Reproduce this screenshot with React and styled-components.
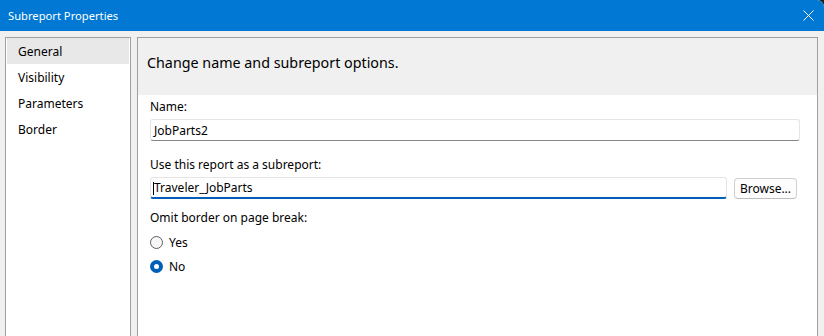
import React from "react";
import styled, { createGlobalStyle } from "styled-components";

const GlobalStyle = createGlobalStyle`
  html, body {
    margin: 0;
    padding: 0;
    background: #1c1c1c;
  }
  * {
    box-sizing: border-box;
  }
`;

const navItems = ["General", "Visibility", "Parameters", "Border"];

function Radio({ checked, label }) {
  return (
    <RadioRow>
      <RadioDot checked={checked} />
      <RadioLabel>{label}</RadioLabel>
    </RadioRow>
  );
}

export default function App() {
  return (
    <Window>
      <GlobalStyle />
      <TitleBar>
        <Title>Subreport Properties</Title>
        <CloseButton>
          <svg width="11" height="11" viewBox="0 0 11 11">
            <path d="M0.5 0.5 L10.5 10.5 M10.5 0.5 L0.5 10.5" stroke="#fff" strokeWidth="1" />
          </svg>
        </CloseButton>
      </TitleBar>
      <Body>
        <Nav>
          {navItems.map((item, i) => (
            <NavItem key={item} selected={i === 0}>
              {item}
            </NavItem>
          ))}
        </Nav>
        <Panel>
          <Header>Change name and subreport options.</Header>
          <Content>
            <Label>Name:</Label>
            <TextBox>JobParts2</TextBox>
            <Label top={16}>Use this report as a subreport:</Label>
            <BrowseRow>
              <TextBox focused>
                <Caret />
                Traveler_JobParts
              </TextBox>
              <Button>Browse...</Button>
            </BrowseRow>
            <Label top={11}>Omit border on page break:</Label>
            <Radio label="Yes" />
            <Radio label="No" checked />
          </Content>
        </Panel>
      </Body>
    </Window>
  );
}

const Window = styled.div`
  width: 824px;
  height: 336px;
  overflow: hidden;
  background: #f0f0f0;
  border-top-right-radius: 7px;
  display: flex;
  flex-direction: column;
  font-family: "Noto Sans", "Segoe UI", sans-serif;
  font-size: 12px;
  color: #000;
`;

const TitleBar = styled.div`
  height: 31px;
  flex-shrink: 0;
  background: #0078d4;
  display: flex;
  align-items: center;
  justify-content: space-between;
  padding: 0 10px 0 8px;
`;

const Title = styled.div`
  color: #fff;
  font-size: 11.2px;
`;

const CloseButton = styled.div`
  display: flex;
  align-items: center;
`;

const Body = styled.div`
  flex: 1;
  display: flex;
  gap: 6px;
  padding: 6px 6px 0 5px;
`;

const Nav = styled.div`
  width: 126px;
  background: #fff;
  border: 1px solid #a0a0a0;
  border-bottom: none;
  padding: 0 1px;
`;

const NavItem = styled.div`
  height: 26px;
  display: flex;
  align-items: center;
  padding-left: 11px;
  background: ${(p) => (p.selected ? "#e8e8e8" : "transparent")};
`;

const Panel = styled.div`
  width: 681px;
  border: 1px solid #a0a0a0;
  border-bottom: none;
  display: flex;
  flex-direction: column;
`;

const Header = styled.div`
  height: 57px;
  display: flex;
  align-items: center;
  padding: 0 0 9px 9px;
  font-size: 14.3px;
  background: #f0f0f0;
`;

const Content = styled.div`
  flex: 1;
  background: #fff;
  padding: 4px 17px 0 12px;
`;

const Label = styled.div`
  line-height: 16px;
  margin-top: ${(p) => p.top || 0}px;
  margin-bottom: 4px;
`;

const TextBox = styled.div`
  position: relative;
  height: 22px;
  flex: 1;
  display: flex;
  align-items: center;
  padding-left: 3px;
  background: #fff;
  border: 1px solid #e5e5e5;
  border-bottom: ${(p) => (p.focused ? "2px solid #005fb8" : "1px solid #868686")};
  border-radius: 3px;
`;

const Caret = styled.span`
  position: absolute;
  left: 2px;
  top: 4px;
  width: 1px;
  height: 13px;
  background: #000;
`;

const BrowseRow = styled.div`
  display: flex;
  align-items: flex-start;
  gap: 7px;
  padding-right: 3px;
`;

const Button = styled.div`
  width: 63px;
  height: 21px;
  margin-top: 1px;
  display: flex;
  align-items: center;
  justify-content: center;
  background: #fdfdfd;
  border: 1px solid #d0d0d0;
  border-bottom-color: #bdbdbd;
  border-radius: 4px;
`;

const RadioRow = styled.div`
  height: 24px;
  display: flex;
  align-items: center;
  gap: 6px;
`;

const RadioDot = styled.span`
  width: 13px;
  height: 13px;
  border-radius: 50%;
  background: ${(p) => (p.checked ? "#005fb8" : "#f7f7f7")};
  border: ${(p) => (p.checked ? "none" : "1px solid #5f5f5f")};
  display: flex;
  align-items: center;
  justify-content: center;

  &::after {
    content: "";
    display: ${(p) => (p.checked ? "block" : "none")};
    width: 5px;
    height: 5px;
    border-radius: 50%;
    background: #fff;
  }
`;

const RadioLabel = styled.span``;
